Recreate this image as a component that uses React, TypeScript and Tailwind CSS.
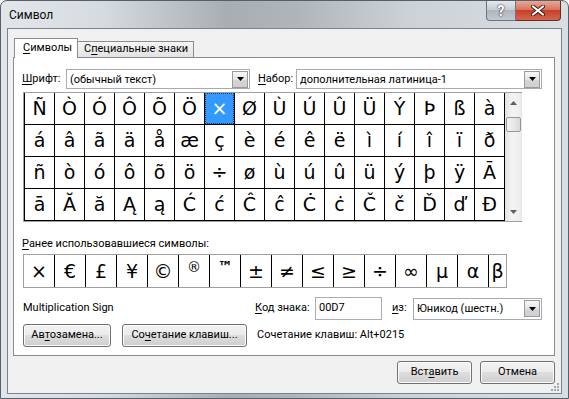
import React from "react";

const rows = [
  "ÑÒÓÔÕÖ×ØÙÚÛÜÝÞßà",
  "áâãäåæçèéêëìíîïð",
  "ñòóôõö÷øùúûüýþÿĀ",
  "āĂăĄąĆćĈĉĊċČčĎďĐ",
];

const recent = ["×", "€", "£", "¥", "©", "®", "™", "±", "≠", "≤", "≥", "÷", "∞", "μ", "α", "β"];

const glyph = { fontFamily: '"DejaVu Sans", "Noto Sans", sans-serif' };

function Arrow() {
  return (
    <svg width="7" height="4" viewBox="0 0 7 4">
      <path d="M0 0h7L3.5 4z" fill="#000" />
    </svg>
  );
}

function Combo({ className, text }: { className: string; text: string }) {
  return (
    <div className={`flex items-center border border-[#a5acb5] bg-white ${className}`}>
      <span className="flex-1 truncate pl-[3px] leading-none">{text}</span>
      <span className="mr-px flex h-[17px] w-[16px] items-center justify-center border border-[#9a9a9a] bg-[linear-gradient(#f7f7f7,#e3e3e3_50%,#d6d6d6_51%,#cfcfcf)]">
        <Arrow />
      </span>
    </div>
  );
}

function Btn({ className, children }: { className: string; children: React.ReactNode }) {
  return (
    <div
      className={`flex h-[23px] items-center justify-center rounded-[3px] border border-[#707070] bg-[linear-gradient(#f2f2f2,#ebebeb_50%,#dddddd_50%,#cfcfcf)] shadow-[inset_0_0_0_1px_#fbfbfb] ${className}`}
    >
      {children}
    </div>
  );
}

export default function App() {
  return (
    <div className="h-[399px] w-[569px] overflow-hidden whitespace-nowrap bg-white font-['Roboto','Noto_Sans',sans-serif] text-[11px] text-black">
      <div className="relative flex h-full w-full flex-col rounded-t-[7px] border border-[#56606b] bg-[linear-gradient(90deg,#e2e6ea_0%,#d6dbe0_18%,#a9aeb3_40%,#b0b5ba_52%,#cdd2d7_72%,#d9dee3_100%)]">
        {/* title bar */}
        <div className="flex h-[27px] items-start">
          <span className="ml-[8px] mt-[6px] text-[12px] leading-[16px] text-[#0a0a0a]">Символ</span>
          <div className="ml-auto mr-[7px] flex">
            <div className="flex h-[20px] w-[30px] items-center justify-center rounded-bl-[4px] border border-t-0 border-[#6b7480] bg-[linear-gradient(#e4e8ec,#c9ced4_45%,#aeb5bd_50%,#c2c9d0)]">
              <span className="text-[14px] font-bold leading-none text-white [text-shadow:0_0_1px_#30363d,0_0_2px_#30363d]">?</span>
            </div>
            <div className="flex h-[20px] w-[45px] items-center justify-center rounded-br-[4px] border border-l-0 border-t-0 border-[#6a2c22] bg-[linear-gradient(#e8a898,#d7735f_45%,#c7402a_50%,#d6654e)]">
              <svg width="14" height="11" viewBox="0 0 14 11">
                <path d="M2 1.5l10 8M12 1.5l-10 8" stroke="#3a1d18" strokeWidth="4" strokeLinecap="round" />
                <path d="M2 1.5l10 8M12 1.5l-10 8" stroke="#fff" strokeWidth="2.2" strokeLinecap="round" />
              </svg>
            </div>
          </div>
        </div>

        {/* client area */}
        <div className="relative mx-[6px] mb-[4px] flex flex-1 flex-col border border-[#7a8591] bg-[#f0f0f0] pl-[5px] pt-[9px]">
          {/* tabs */}
          <div className="flex h-[19px] items-end pl-px">
            <div className="relative z-10 -mb-px flex h-[20px] w-[64px] items-center border border-b-0 border-[#898c95] bg-white pl-[8px]">
              <span><span className="underline underline-offset-2">С</span>имволы</span>
            </div>
            <div className="flex h-[16px] w-[116px] items-center border border-b-0 border-l-0 border-[#898c95] bg-[linear-gradient(#f6f6f6,#e2e2e2)] pl-[6px]">
              <span>С<span className="underline underline-offset-2">п</span>ециальные знаки</span>
            </div>
          </div>

          {/* panel */}
          <div className="flex h-[299px] w-[542px] flex-col border border-[#898c95] bg-white pl-[8px] pt-[11px]">
            <div className="flex h-[20px] items-center">
              <span className="w-[44px]"><span className="underline underline-offset-2">Ш</span>рифт:</span>
              <Combo className="h-[20px] w-[184px]" text="(обычный текст)" />
              <span className="ml-[8px] w-[38px]"><span className="underline underline-offset-2">Н</span>абор:</span>
              <Combo className="h-[20px] w-[246px]" text="дополнительная латиница-1" />
            </div>

            {/* character grid */}
            <div className="ml-px mt-[3px] flex w-[499px] border-b border-l border-t border-[#a0a0a0]">
              <div className="flex flex-col border-l border-black" style={glyph}>
                {rows.map((r, ri) => (
                  <div key={ri} className="flex">
                    {Array.from(r).map((c, ci) =>
                      ri === 0 && ci === 6 ? (
                        <div key={ci} className="flex h-[32px] w-[30px] items-center justify-center border-b border-r border-black">
                          <div className="flex h-full w-full items-center justify-center border border-dotted border-[#1b3a66] bg-[#3399ff] text-[19px] text-white">
                            {c}
                          </div>
                        </div>
                      ) : (
                        <div key={ci} className="flex h-[32px] w-[30px] items-center justify-center border-b border-r border-black text-[19px]">
                          {c}
                        </div>
                      )
                    )}
                  </div>
                ))}
              </div>
              {/* scrollbar */}
              <div className="flex w-[17px] flex-col items-center bg-[linear-gradient(90deg,#e3e3e3,#f3f3f3_40%,#f0f0f0_80%,#e6e6e6)]">
                <div className="flex h-[17px] items-center justify-center pt-[2px]">
                  <svg width="7" height="4" viewBox="0 0 7 4">
                    <path d="M0 4L3.5 0 7 4z" fill="#5e5e5e" />
                  </svg>
                </div>
                <div className="mt-[7px] h-[15px] w-[15px] rounded-[2px] border border-[#979797] bg-[linear-gradient(90deg,#f4f4f4,#e8e8e8_50%,#d9d9d9)]" />
                <div className="flex-1" />
                <div className="flex h-[17px] items-center justify-center pb-[2px]">
                  <svg width="7" height="4" viewBox="0 0 7 4">
                    <path d="M0 0h7L3.5 4z" fill="#5e5e5e" />
                  </svg>
                </div>
              </div>
            </div>

            <div className="mt-[15px] leading-[14px]">
              <span className="underline underline-offset-2">Р</span>анее использовавшиеся символы:
            </div>
            <div className="ml-px mt-[3px] flex h-[34px] w-[484px] border border-[#a0a0a0]" style={glyph}>
              {recent.map((c, i) => (
                <div
                  key={i}
                  className={`flex h-full items-center justify-center ${i === 0 ? "w-[30px]" : "w-[31px] border-l border-black"} ${
                    i === 5 ? "pb-[8px] text-[14px]" : i === 6 ? "pb-[8px] text-[15px] font-bold" : "text-[19px]"
                  } ${i === 15 ? "flex-1" : ""}`}
                >
                  {c}
                </div>
              ))}
            </div>

            <div className="mt-[9px] flex h-[23px] items-center">
              <span className="ml-px w-[232px]">Multiplication Sign</span>
              <span className="w-[60px]"><span className="underline underline-offset-2">К</span>од знака:</span>
              <div className="flex h-[23px] w-[67px] items-center border border-[#abadb3] bg-white pl-[3px]">00D7</div>
              <span className="ml-[10px] w-[21px]"><span className="underline underline-offset-2">и</span>з:</span>
              <Combo className="h-[22px] w-[129px]" text="Юникод (шестн.)" />
            </div>

            <div className="mt-[4px] flex items-center">
              <Btn className="ml-px w-[88px]">
                <span>Ав<span className="underline underline-offset-2">т</span>озамена...</span>
              </Btn>
              <Btn className="ml-[11px] w-[125px]">
                <span>Со<span className="underline underline-offset-2">ч</span>етание клавиш...</span>
              </Btn>
              <span className="ml-[10px]">Сочетание клавиш: Alt+0215</span>
            </div>
          </div>

          {/* dialog buttons */}
          <div className="mt-[5px] flex w-[542px] justify-end gap-[8px]">
            <Btn className="w-[75px] border-[#3c7fb1] shadow-[inset_0_0_0_1px_#9fe3fb]">
              <span>Вст<span className="underline underline-offset-2">а</span>вить</span>
            </Btn>
            <Btn className="w-[75px]">
              <span>Отмена</span>
            </Btn>
          </div>

          {/* resize grip */}
          <svg className="absolute bottom-[1px] right-[1px]" width="10" height="10" viewBox="0 0 10 10">
            {[
              [8, 2],
              [8, 5],
              [5, 5],
              [8, 8],
              [5, 8],
              [2, 8],
            ].map(([x, y], i) => (
              <rect key={i} x={x - 1} y={y - 1} width="2" height="2" fill="#a4a8ad" />
            ))}
          </svg>
        </div>
      </div>
    </div>
  );
}
